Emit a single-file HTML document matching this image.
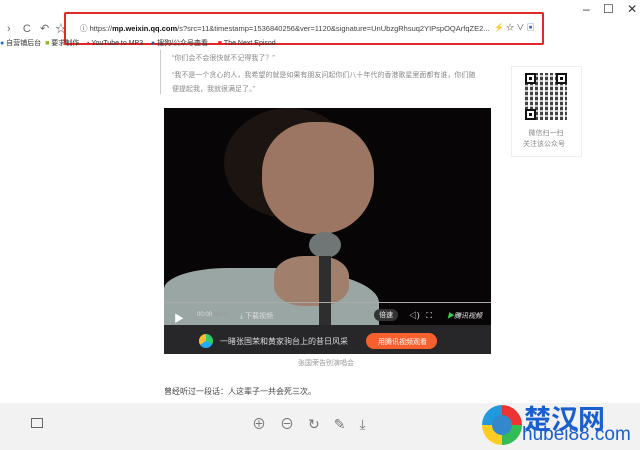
<!DOCTYPE html>
<html><head><meta charset="utf-8"><style>
*{margin:0;padding:0;box-sizing:border-box}
body{width:640px;height:450px;overflow:hidden;background:#fff;font-family:"Liberation Sans","Noto Sans CJK SC",sans-serif;position:relative}
.a{position:absolute}
.t{font-size:8px;color:#555;white-space:nowrap}
</style></head><body>
<div class="a t" style="left:583px;top:2px;font-size:12px;color:#333">–&nbsp;&nbsp;&nbsp;&nbsp;☐&nbsp;&nbsp;&nbsp;&nbsp;✕</div>
<div class="a t" style="left:7px;top:20px;font-size:11px;color:#666">›&nbsp;&nbsp;&nbsp;&nbsp;C&nbsp;&nbsp;&nbsp;↶&nbsp;&nbsp;☆</div>
<div class="a t" style="left:80px;top:23px;font-size:7.5px;color:#444">ⓘ https://<b style="color:#111">mp.weixin.qq.com</b>/s?src=11&amp;timestamp=1536840256&amp;ver=1120&amp;signature=UnUbzgRhsuq2YIPspOQArfqZE2...</div>
<div class="a t" style="left:494px;top:22px;font-size:8px;color:#555">⚡ ☆ ∨ <span style="color:#36c">▣</span></div>
<div class="a" style="left:64px;top:12px;width:480px;height:33px;border:2px solid #e02828;border-radius:2px"></div>
<div class="a t" style="left:0;top:38px;font-size:7px;color:#333"><span style="color:#1a6fd6">●</span> 自营铺后台 &nbsp;<span style="color:#8b2">■</span> 要求制作 &nbsp;&nbsp; <span style="color:#c33">▪</span> YouTube to MP3 &nbsp;&nbsp;&nbsp;<span style="color:#35a">●</span> 搜狗/公众号查看 &nbsp;&nbsp;&nbsp; <span style="color:#e22">■</span> The Next Episod</div>
<div class="a" style="left:160px;top:50px;width:1px;height:44px;background:#ccc"></div>
<div class="a t" style="left:172px;top:53px;color:#888;font-size:7px">“你们会不会很快就不记得我了？”</div>
<div class="a t" style="left:172px;top:70px;color:#888;font-size:7px">“我不是一个贪心的人，我希望的就是如果有朋友问起你们八十年代的香港歌星里面都有谁，你们随</div>
<div class="a t" style="left:172px;top:84px;color:#888;font-size:7px">便提起我，我就很满足了。”</div>
<div class="a" style="left:511px;top:66px;width:71px;height:91px;border:1px solid #eee;background:#fff"></div>
<div class="a" style="left:525px;top:73px;width:42px;height:47px;background:repeating-linear-gradient(90deg,#222 0 3px,#fff 3px 5px),#222;opacity:.85"></div>
<div class="a" style="left:525px;top:73px;width:42px;height:47px;background:repeating-linear-gradient(0deg,transparent 0 3px,rgba(255,255,255,.7) 3px 5px)"></div>
<div class="a" style="left:525px;top:73px;width:11px;height:11px;border:2px solid #111;background:#fff;box-shadow:inset 0 0 0 2px #fff,inset 0 0 0 5px #111"></div>
<div class="a" style="left:556px;top:73px;width:11px;height:11px;border:2px solid #111;background:#fff;box-shadow:inset 0 0 0 2px #fff,inset 0 0 0 5px #111"></div>
<div class="a" style="left:525px;top:109px;width:11px;height:11px;border:2px solid #111;background:#fff;box-shadow:inset 0 0 0 2px #fff,inset 0 0 0 5px #111"></div>
<div class="a t" style="left:527px;top:128px;font-size:7px;color:#888;text-align:center;line-height:11px">微信扫一扫<br><span style="margin-left:-4px">关注该公众号</span></div>
<div class="a" style="left:164px;top:108px;width:327px;height:217px;background:#070505;overflow:hidden">
  <div class="a" style="left:60px;top:0px;width:130px;height:110px;border-radius:50%;background:#1c1411"></div>
  <div class="a" style="left:98px;top:14px;width:112px;height:112px;border-radius:45% 45% 48% 48%;background:#9c7563"></div>
  <div class="a" style="left:0px;top:160px;width:215px;height:70px;border-radius:30% 50% 0 0;background:#9aa6a4"></div>
  <div class="a" style="left:110px;top:148px;width:75px;height:50px;border-radius:40%;background:#a07f6c"></div>
  <div class="a" style="left:145px;top:124px;width:32px;height:26px;border-radius:50%;background:#707676"></div>
  <div class="a" style="left:155px;top:148px;width:12px;height:70px;background:#2e2e2e"></div>
</div>
<div class="a" style="left:164px;top:302px;width:327px;height:1px;background:#aaa"></div>
<div class="a t" style="left:174px;top:310px;color:#fff;font-size:10px">▶</div>
<div class="a t" style="left:197px;top:312px;color:#ddd;font-size:6px">00:00<span style="color:#999">/00:00</span></div>
<div class="a t" style="left:240px;top:311px;color:#ddd;font-size:7px">⤓ 下载视频</div>
<div class="a t" style="left:374px;top:309px;color:#eee;font-size:7px;background:#333;border-radius:6px;padding:1px 5px">倍速</div>
<div class="a t" style="left:409px;top:310px;color:#eee;font-size:8px">◁)&nbsp;&nbsp; ⛶</div>
<div class="a t" style="left:447px;top:311px;color:#eee;font-size:7px;font-style:italic"><span style="color:#3c4">▶</span>腾讯视频</div>
<div class="a" style="left:164px;top:325px;width:327px;height:29px;background:#27272a"></div>
<div class="a" style="left:199px;top:334px;width:14px;height:14px;border-radius:50%;background:conic-gradient(#3c6 0 33%,#2af 0 66%,#fb3 0)"></div>
<div class="a t" style="left:220px;top:336px;color:#ddd;font-size:8px">一睹张国荣和黄家驹台上的昔日风采</div>
<div class="a" style="left:366px;top:333px;width:71px;height:16px;border-radius:8px;background:#f5602e"></div>
<div class="a t" style="left:378px;top:337px;color:#fff;font-size:7px">用腾讯视频观看</div>
<div class="a t" style="left:298px;top:358px;color:#999;font-size:7px">张国荣告别演唱会</div>
<div class="a t" style="left:164px;top:386px;color:#444;font-size:8px">曾经听过一段话：人这辈子一共会死三次。</div>
<div class="a" style="left:0;top:403px;width:640px;height:47px;background:#f2f2f2"></div>
<div class="a" style="left:31px;top:418px;width:12px;height:10px;border:1px solid #666"></div>
<div class="a t" style="left:252px;top:414px;font-size:14px;color:#777;letter-spacing:14px">⊕⊖↻✎⤓</div>
<div class="a" style="left:482px;top:405px;width:40px;height:40px;border-radius:50%;background:conic-gradient(#e33 0 25%,#3b5 0 50%,#fc2 0 75%,#29d 0)"></div>
<div class="a" style="left:492px;top:415px;width:20px;height:20px;border-radius:50%;background:#38c"></div>
<div class="a t" style="left:524px;top:398px;font-size:27px;font-weight:bold;color:#1a5fd0">楚汉网</div>
<div class="a t" style="left:522px;top:424px;font-size:19px;color:#1a5fd0">hubei88.com</div>
</body></html>
